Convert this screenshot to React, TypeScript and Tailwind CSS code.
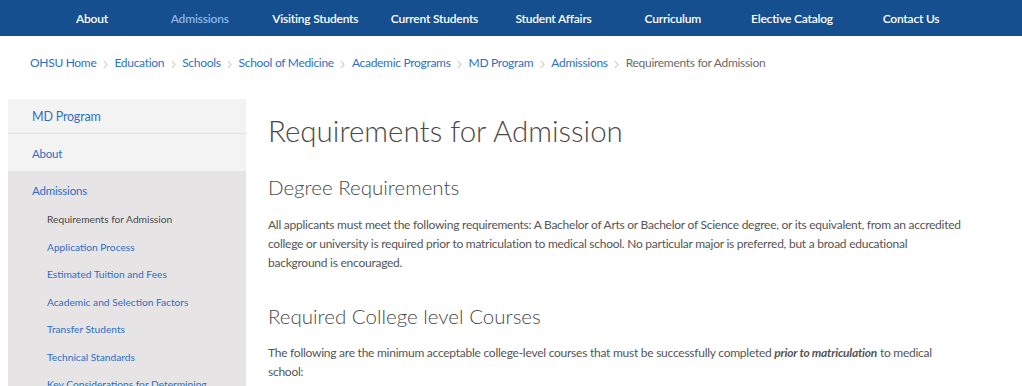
import React from 'react';

// widths picked so each label sits over its spot in the bar
const navItems = [
  { label: 'About', w: 'w-[104px]' },
  { label: 'Admissions', w: 'w-[111.5px]' },
  { label: 'Visiting Students', w: 'w-[119.5px]' },
  { label: 'Current Students', w: 'w-[119px]' },
  { label: 'Student Affairs', w: 'w-[119px]' },
  { label: 'Curriculum', w: 'w-[119.5px]' },
  { label: 'Elective Catalog', w: 'w-[119px]' },
  { label: 'Contact Us', w: 'w-[119px]' },
];

const crumbs = [
  'OHSU Home',
  'Education',
  'Schools',
  'School of Medicine',
  'Academic Programs',
  'MD Program',
  'Admissions',
];

const subLinks = [
  'Requirements for Admission',
  'Application Process',
  'Estimated Tuition and Fees',
  'Academic and Selection Factors',
  'Transfer Students',
  'Technical Standards',
  'Key Considerations for Determining',
];

const Chevron = () => (
  <svg width="5" height="9" viewBox="0 0 5 9" className="mx-[6.5px] mt-[2px]">
    <path d="M0.8 1l3.2 3.5L0.8 8" fill="none" stroke="#c8c8c8" strokeWidth="1.1" />
  </svg>
);

export default function App() {
  return (
    <div className="h-[386px] w-[1022px] overflow-hidden bg-white font-['Lato','Liberation_Sans',sans-serif]">
      {/* top nav */}
      <nav className="flex h-[36px] items-center bg-[#164f8f] pl-[40px] pt-[1px]">
        {navItems.map(item => (
          <div
            key={item.label}
            className={`${item.w} shrink-0 text-center text-[12px] font-semibold tracking-[-0.2px] ${item.label === 'Admissions' ? 'text-[#8db6ea]' : 'text-white'}`}
          >
            {item.label}
          </div>
        ))}
      </nav>

      {/* breadcrumb */}
      <div className="flex h-[54px] items-center pl-[30px] text-[12px] tracking-[-0.3px]">
        {crumbs.map(c => (
          <React.Fragment key={c}>
            <span className="text-[#2f6fc4]">{c}</span>
            <Chevron />
          </React.Fragment>
        ))}
        <span className="text-[#6b6b6b]">Requirements for Admission</span>
      </div>

      <div className="mt-[9px] flex">
        {/* sidebar */}
        <aside className="ml-[8px] w-[238px] shrink-0">
          <div className="flex h-[35px] items-center border-b border-[#e2e2e2] bg-[#f3f3f3] pl-[24px] pt-[3px] text-[12.5px] tracking-[-0.2px] text-[#2f6fc4]">
            MD Program
          </div>
          <div className="flex h-[37px] items-center bg-[#f3f3f3] pl-[24px] pt-[2px] text-[11.5px] tracking-[-0.2px] text-[#2f6fc4]">
            About
          </div>
          <div className="h-[250px] bg-[#e6e4e4] pt-[11px]">
            <div className="pl-[24px] text-[11.5px] leading-[18px] tracking-[-0.2px] text-[#2f6fc4]">Admissions</div>
            <ul className="mt-[12px] pl-[39px]">
              {subLinks.map((s, i) => (
                <li
                  key={s}
                  className={`h-[27.5px] text-[10.2px] leading-[14px] ${i === 0 ? 'text-[#4a4a4a]' : 'text-[#2f6fc4]'}`}
                >
                  {s}
                </li>
              ))}
            </ul>
          </div>
        </aside>

        {/* main */}
        <main className="ml-[22px] w-[700px] text-[#555555]">
          <h1 className="mt-[12px] text-[29.5px] font-light leading-[40px] text-[#4a4a4a]">Requirements for Admission</h1>
          <h2 className="mt-[22px] text-[20.5px] font-light leading-[28px] text-[#4a4a4a]">Degree Requirements</h2>
          <p className="mt-[14px] text-[12px] leading-[19px] tracking-[-0.25px]">
            All applicants must meet the following requirements: A Bachelor of Arts or Bachelor of Science degree, or its equivalent, from an accredited college or university is required prior to matriculation to medical school. No particular major is preferred, but a broad educational background is encouraged.
          </p>
          <h2 className="mt-[30px] text-[20.5px] font-light leading-[28px] text-[#4a4a4a]">Required College level Courses</h2>
          <p className="mt-[13px] text-[12px] leading-[19px] tracking-[-0.25px]">
            The following are the minimum acceptable college-level courses that must be successfully completed{' '}
            <b className="italic">prior to matriculation</b> to medical school:
          </p>
        </main>
      </div>
    </div>
  );
}
